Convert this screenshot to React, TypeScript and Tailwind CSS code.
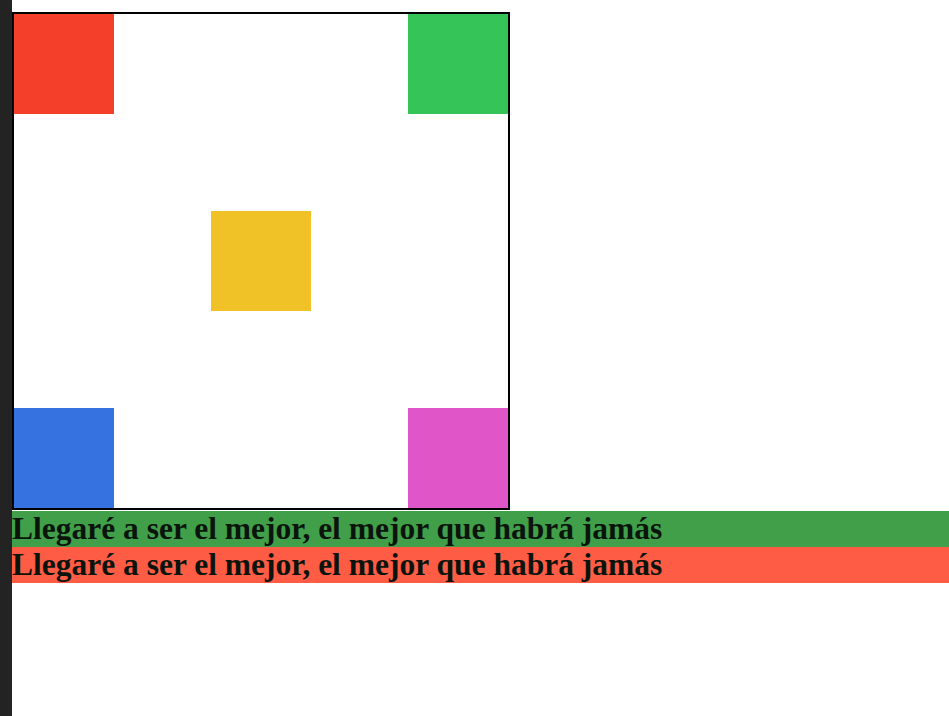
const SQ = "w-[100px] h-[100px]";

export default function App() {
  return (
    <div className="flex w-[949px] h-[716px] bg-white overflow-hidden">
      <div className="w-[12px] shrink-0 bg-[#232323]" />
      <div className="flex flex-col flex-1 pt-[12px]">
        <div className="flex flex-col justify-between w-[498px] h-[498px] border-2 border-black">
          <div className="flex justify-between">
            <div className={`${SQ} bg-[#f4402a]`} />
            <div className={`${SQ} bg-[#35c457]`} />
          </div>
          <div className="flex justify-center">
            <div className={`${SQ} bg-[#f0c228]`} />
          </div>
          <div className="flex justify-between">
            <div className={`${SQ} bg-[#3672e0]`} />
            <div className={`${SQ} bg-[#e055c8]`} />
          </div>
        </div>
        <div className="mt-[1px] font-['Liberation_Serif',serif] font-bold text-[#0b140b] text-[31.5px] leading-[36px]">
          <p className="bg-[#419f4a]">Llegaré a ser el mejor, el mejor que habrá jamás</p>
          <p className="bg-[#ff5c46]">Llegaré a ser el mejor, el mejor que habrá jamás</p>
        </div>
      </div>
    </div>
  );
}
